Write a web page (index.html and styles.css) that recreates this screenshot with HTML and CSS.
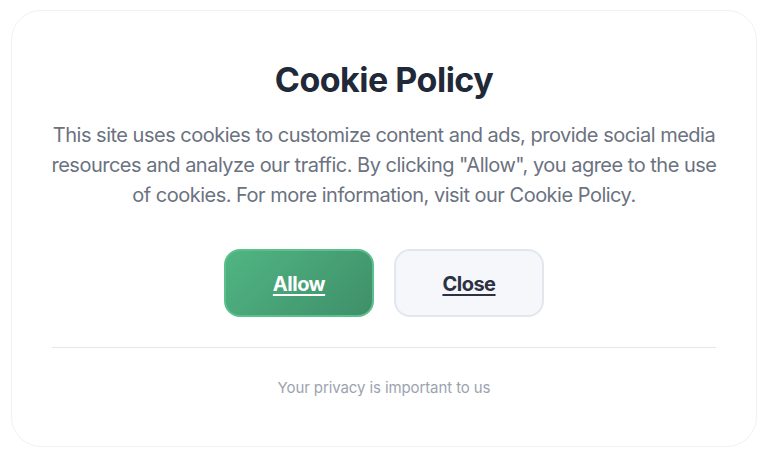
FILE: index.html
```html
<!DOCTYPE html>
<html lang="en">
<head>
<meta charset="UTF-8">
<meta name="viewport" content="width=device-width, initial-scale=1.0">
<title>Cookie Policy</title>
<link rel="stylesheet" href="styles.css">
</head>
<body>
<div class="card">
    <h1>Cookie Policy</h1>
    <p class="text">This site uses cookies to customize content and ads, provide social media resources and analyze our traffic. By clicking "Allow", you agree to the use of cookies. For more information, visit our Cookie Policy.</p>

    <div class="actions">
        <a href="#" class="btn btn-allow">Allow</a>
        <a href="#" class="btn btn-close">Close</a>
    </div>

    <hr class="divider">

    <p class="footer">Your privacy is important to us</p>
</div>
</body>
</html>
```

FILE: styles.css
```css
html, body {
    background: #ffffff;
}

body {
    font-family: Inter, "Noto Sans", sans-serif;
    margin: 0;
    padding: 10px 11px;
}

.card {
    height: 437px;
    box-sizing: border-box;
    padding: 48px 39px 0;
    border: 1px solid #f1f1f3;
    border-radius: 30px;
    text-align: center;
}

h1 {
    margin: 0;
    font-size: 34px;
    line-height: 42px;
    font-weight: 700;
    letter-spacing: -0.5px;
    color: #1f2937;
}

.text {
    margin: 19px 0 0;
    font-size: 20px;
    line-height: 30px;
    letter-spacing: -0.5px;
    color: #6b7280;
}

.actions {
    display: flex;
    justify-content: center;
    gap: 20px;
    margin-top: 39px;
}

.btn {
    width: 150px;
    height: 68px;
    box-sizing: border-box;
    padding-top: 2px;
    display: flex;
    align-items: center;
    justify-content: center;
    border-radius: 16px;
    font-size: 20px;
    font-weight: 700;
    letter-spacing: -0.5px;
    text-decoration: underline;
    text-underline-offset: 3px;
}

.btn-allow {
    color: #ffffff;
    background: linear-gradient(135deg, #50b582 0%, #3f8f69 100%);
    border: 2px solid #5cc08d;
}

.btn-close {
    color: #2d3142;
    background: #f5f7fa;
    border: 2px solid #e2e7ef;
}

.divider {
    margin: 30px 1px 0;
    border: none;
    border-top: 1px solid #e5e7eb;
}

.footer {
    margin: 29px 0 0;
    font-size: 15px;
    line-height: 22px;
    letter-spacing: -0.1px;
    color: #9ca3af;
}
```
